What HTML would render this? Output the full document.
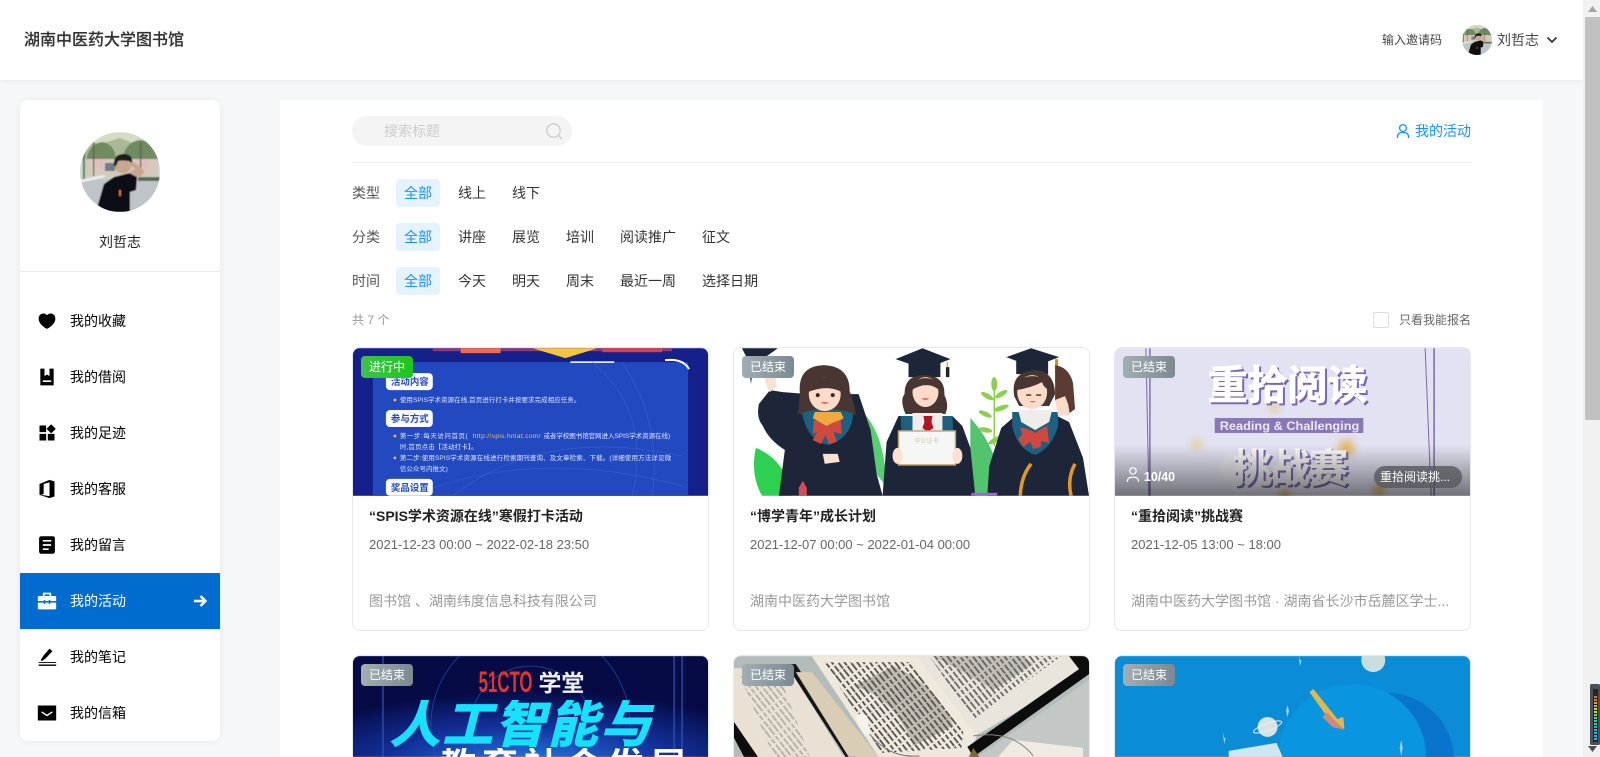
<!DOCTYPE html>
<html lang="zh-CN"><head><meta charset="utf-8"><title>湖南中医药大学图书馆</title>
<style>
*{box-sizing:border-box;margin:0;padding:0}
html,body{width:1600px;height:757px;overflow:hidden;background:#f6f7f9}
body{position:relative;font-family:"Liberation Sans","Noto Sans CJK SC",sans-serif;font-size:14px;color:#333}
.a{position:absolute;white-space:nowrap}
#hd{left:0;top:0;width:1583px;height:80px;background:#fff;box-shadow:0 1px 5px rgba(0,0,0,.06)}
#side{left:20px;top:100px;width:200px;height:641px;background:#fff;border-radius:8px;box-shadow:0 0 8px rgba(0,0,0,.06);overflow:hidden}
.row{position:absolute;left:0;width:200px;height:56px;line-height:56px;color:#000}
.row span{position:absolute;left:50px;top:0}
.row svg{position:absolute;left:17px;top:18px;width:20px;height:20px}
.row.on{background:#006ccf;color:#fff}
#main{left:280px;top:100px;width:1263px;height:657px;background:#fff}
.lb{left:352px;line-height:28px;color:#555}
.pill{line-height:28px;height:28px;color:#333}
.pill.on{background:#e5f2ff;color:#1890ff;border-radius:4px;width:44px;text-align:center}
.card{position:absolute;width:357px;height:284px;background:#fff;border:1px solid #e8e8e8;border-radius:8px;overflow:hidden}
.card.r2{height:102px;border-bottom:0;border-radius:8px 8px 0 0}
.card svg.im{position:absolute;left:0;top:0;width:355px;height:148px}
.card.r2 svg.im{height:101px}
.tag{position:absolute;left:8px;top:8px;width:52px;height:22px;border-radius:4px;color:#fff;font-size:12px;line-height:22px;text-align:center;background:linear-gradient(90deg,#a1aeb3,#7c8991)}
.tag.g{background:linear-gradient(90deg,#3ec24a,#1fc41f)}
.t{position:absolute;left:16px;top:158px;line-height:20px;font-weight:bold;color:#222;white-space:nowrap}
.d{position:absolute;left:16px;top:187px;line-height:20px;font-size:13px;color:#666;white-space:nowrap}
.o{position:absolute;left:16px;top:243px;line-height:20px;color:#999;white-space:nowrap;width:324px;overflow:hidden;text-overflow:ellipsis}
#sb{left:1583px;top:0;width:17px;height:757px;background:#f1f1f1}
</style></head><body>

<div class="a" id="hd"></div>
<div class="a" style="left:24px;top:29px;line-height:24px;font-size:16px;font-weight:500;color:#333;-webkit-text-stroke:.15px #333">湖南中医药大学图书馆</div>
<div class="a" style="left:1382px;top:30px;line-height:20px;font-size:12px;color:#444">输入邀请码</div>
<svg class="a" style="left:1462px;top:25px" width="30" height="30" viewBox="0 0 80 80"><defs><clipPath id="c1"><circle cx="40" cy="40" r="40"/></clipPath></defs><g clip-path="url(#c1)"><use href="#av"/></g></svg>
<div class="a" style="left:1497px;top:30px;line-height:20px;color:#444">刘哲志</div>
<svg class="a" style="left:1546px;top:35px" width="12" height="10" viewBox="0 0 12 10"><path d="M1.500 2.500 6 7l4.500-4.500" fill="none" stroke="#333" stroke-width="1.700"/></svg>

<div class="a" id="side">
 <svg style="position:absolute;left:60px;top:32px" width="80" height="80" viewBox="0 0 80 80"><defs><clipPath id="c2"><circle cx="40" cy="40" r="40"/></clipPath><filter id="bav" x="0" y="0" width="100%" height="100%"><feGaussianBlur stdDeviation=".5"/></filter>
 <g id="av"><rect width="80" height="80" fill="#cfd3c4"/><rect width="80" height="28" fill="#a9b896"/><path d="M0 0h80v8L60 14 40 6 20 12 0 8Z" fill="#d6dcc4"/><path d="M6 30q2-18 16-20 14 2 14 20ZM42 28q4-20 20-20 14 4 18 20Z" fill="#708a62"/><rect x="4" y="27" width="74" height="17" fill="#d4cabb"/><rect x="14" y="27" width="9" height="10" fill="#e2bdbd"/><rect x="58" y="27" width="10" height="10" fill="#e2bdbd"/><rect x="25" y="31" width="10" height="8" fill="#727a86"/><rect x="3" y="20" width="2" height="27" fill="#3f8a60"/><rect x="13" y="10" width="1.200" height="34" fill="#55634a"/><rect x="60" y="10" width="1.200" height="34" fill="#55634a"/><path d="M0 50 30 46h50v34H0Z" fill="#bfc4c8"/><path d="M0 48l24-5 1 2L0 51Z" fill="#eee"/><path d="M58 45h22v4H58Z" fill="#5f6a52"/>
 <path d="M17 76 24 52 34 45 50 41l7 4-1 13-6 2 0 20H18Z" fill="#101012"/><path d="M49 41l8 4 8-4-4-6-10-6-3 2 7 6Z" fill="#c9a58d"/><circle cx="43" cy="33" r="8.500" fill="#c9a690"/><path d="M34 34q-1-12 10-12 9 0 8 9l-3-2q-8-1-11 0l-2 5Z" fill="#1a1a1f"/><rect x="39" y="58" width="2" height="6" fill="#d8713a"/></g></defs><g clip-path="url(#c2)"><g filter="url(#bav)"><use href="#av"/></g></g></svg>
 <div style="position:absolute;left:0;width:200px;top:132px;text-align:center;line-height:20px;color:#222">刘哲志</div>
 <div style="position:absolute;left:0;top:171px;width:200px;height:1px;background:#eee"></div>

 <div class="row" style="top:193px"><svg viewBox="0 0 24 24"><path d="M16.500 3C19.538 3 22 5.500 22 9c0 7-7.500 11-10 12.500C9.500 20 2 16 2 9c0-3.500 2.500-6 5.500-6C9.360 3 11 4 12 5c1-1 2.640-2 4.500-2z"/></svg><span>我的收藏</span></div>
 <div class="row" style="top:249px"><svg viewBox="0 0 24 24"><path fill-rule="evenodd" d="M4 2h5v9l3-2 3 2V2h5v20H4ZM7 16v2h10v-2Z"/></svg><span>我的借阅</span></div>
 <div class="row" style="top:305px"><svg viewBox="0 0 24 24"><path d="M3 3h8v8H3ZM3 13h8v8H3ZM13 13h8v8h-8ZM17 1.500 22.500 7 17 12.500 11.500 7Z"/></svg><span>我的足迹</span></div>
 <div class="row" style="top:361px"><svg viewBox="0 0 24 24"><path fill-rule="evenodd" d="M3 19V6L15 1l6 2v18l-6 2ZM15 4 8 6v12l-3 1 10 1.500Z"/></svg><span>我的客服</span></div>
 <div class="row" style="top:417px"><svg viewBox="0 0 24 24"><path fill-rule="evenodd" d="M5 1.500h14a2.500 2.500 0 0 1 2.500 2.500v16a2.500 2.500 0 0 1-2.500 2.500H5A2.500 2.500 0 0 1 2.500 20V4A2.500 2.500 0 0 1 5 1.500ZM7 6v2h10V6ZM7 11v2h10v-2ZM7 16v2h7v-2Z"/></svg><span>我的留言</span></div>
 <div class="row on" style="top:473px"><svg viewBox="0 0 24 24" fill="#fff"><path fill-rule="evenodd" d="M7 6V3a1 1 0 0 1 1-1h8a1 1 0 0 1 1 1v3h5a1 1 0 0 1 1 1v5H16v-1h-2v1H10v-1H8v1H1V7a1 1 0 0 1 1-1ZM9 4v2h6V4ZM1 14h7v1.500h2V14h4v1.500h2V14h7v7a1 1 0 0 1-1 1H2a1 1 0 0 1-1-1Z"/></svg><span>我的活动</span><svg viewBox="0 0 16 16" style="left:172px;top:20px;width:16px;height:16px"><path d="M2 8h11M8.500 3 13.500 8 8.500 13" fill="none" stroke="#fff" stroke-width="2.400"/></svg></div>
 <div class="row" style="top:529px"><svg viewBox="0 0 24 24"><path d="M2 21h21v1.600H2ZM2 18h21v1H2ZM15 2l3.500 3L11 13l-5 4-1.500-1.500L8 10Z"/></svg><span>我的笔记</span></div>
 <div class="row" style="top:585px"><svg viewBox="0 0 24 24"><path fill-rule="evenodd" d="M1 3h22v18H1ZM6 10l-1 1.200 7 4.800 7-4.800-1-1.200-6 4Z"/></svg><span>我的信箱</span></div>
</div>

<div class="a" id="main"></div>
<div class="a" style="left:352px;top:116px;width:220px;height:30px;border-radius:15px;background:#f4f4f4"></div>
<div class="a" style="left:384px;top:121px;line-height:20px;color:#ccc">搜索标题</div>
<svg class="a" style="left:546px;top:123px" width="17" height="17" viewBox="0 0 17 17"><circle cx="7.500" cy="7.500" r="6.700" fill="none" stroke="#ccc" stroke-width="1.300"/><path d="M12.500 12.500 16 16" stroke="#ccc" stroke-width="1.400"/></svg>
<svg class="a" style="left:1396px;top:123px" width="14" height="16" viewBox="0 0 14 16"><circle cx="7" cy="5" r="3.400" fill="none" stroke="#1890ff" stroke-width="1.300"/><path d="M1.500 15v-1.500a4 4 0 0 1 4-4h3a4 4 0 0 1 4 4V15" fill="none" stroke="#1890ff" stroke-width="1.300"/></svg>
<div class="a" style="left:1415px;top:121px;line-height:20px;font-size:14px;color:#1890ff">我的活动</div>
<div class="a" style="left:352px;top:162px;width:1120px;height:1px;background:#eee"></div>

<div class="a lb" style="top:179px">类型</div><div class="a pill on" style="left:396px;top:179px">全部</div><div class="a pill" style="left:458px;top:179px">线上</div><div class="a pill" style="left:512px;top:179px">线下</div>
<div class="a lb" style="top:223px">分类</div><div class="a pill on" style="left:396px;top:223px">全部</div><div class="a pill" style="left:458px;top:223px">讲座</div><div class="a pill" style="left:512px;top:223px">展览</div><div class="a pill" style="left:566px;top:223px">培训</div><div class="a pill" style="left:620px;top:223px">阅读推广</div><div class="a pill" style="left:702px;top:223px">征文</div>
<div class="a lb" style="top:267px">时间</div><div class="a pill on" style="left:396px;top:267px">全部</div><div class="a pill" style="left:458px;top:267px">今天</div><div class="a pill" style="left:512px;top:267px">明天</div><div class="a pill" style="left:566px;top:267px">周末</div><div class="a pill" style="left:620px;top:267px">最近一周</div><div class="a pill" style="left:702px;top:267px">选择日期</div>

<div class="a" style="left:352px;top:310px;line-height:20px;font-size:12px;color:#999">共 7 个</div>
<div class="a" style="left:1373px;top:312px;width:16px;height:16px;border:1px solid #ddd;border-radius:2px;background:#fff"></div>
<div class="a" style="left:1399px;top:310px;line-height:20px;font-size:12px;color:#666">只看我能报名</div>

<div class="card" style="left:352px;top:347px">
<svg class="im" viewBox="0 0 356 148"><defs><filter id="b1"><feGaussianBlur stdDeviation=".3"/></filter><filter id="b2"><feGaussianBlur stdDeviation=".6"/></filter><filter id="b3"><feGaussianBlur stdDeviation="4"/></filter></defs>
<rect width="356" height="148" fill="#15208b"/>
<rect x="80" y="0" width="240" height="3" fill="#8a3a78"/><rect x="108" y="0" width="40" height="5" fill="#ec6a56"/><rect x="250" y="0" width="60" height="4" fill="#d8404a"/>
<path d="M180 0h65l-32 10Z" fill="#f5c542"/>
<rect x="20" y="14" width="316" height="134" fill="#2349c0"/>
<path d="M218 14h44" stroke="#fff" stroke-width="1.500"/><path d="M313 12q18-2 24 9" fill="none" stroke="#fff" stroke-width="2"/>
<g fill="none" stroke="#3b60cf" stroke-width=".6"><path d="M240 14q60 50 40 134M270 14q40 60 30 134M100 148q90-70 230-40M60 148q120-50 270-10"/></g>
<g filter="url(#b1)">
<rect x="33" y="25" width="47" height="17" rx="4" fill="#fff"/><rect x="33" y="62" width="47" height="17" rx="4" fill="#fff"/><rect x="33" y="131" width="47" height="17" rx="4" fill="#fff"/>
<g font-size="9.500" font-weight="bold" fill="#2349c0" text-anchor="middle"><text x="57" y="37">活动内容</text><text x="57" y="74">参与方式</text><text x="57" y="143">奖品设置</text></g>
<g fill="#f5b83a"><circle cx="42" cy="52" r="1.400"/><circle cx="42" cy="88" r="1.400"/><circle cx="42" cy="110" r="1.400"/></g>
<g font-size="6.500" fill="#dfe6ff">
<text x="47" y="54" textLength="181">使用SPIS学术资源在线,首页进行打卡并按要求完成相应任务。</text>
<text x="47" y="90" textLength="68">第一步:每天访问首页(</text><text x="120" y="90" textLength="68" fill="#e8c860">http://spis.hnlat.com/</text><text x="191" y="90" textLength="127">或者学校图书馆官网进入SPIS学术资源在线)</text>
<text x="47" y="101" textLength="78">时,首页点击【活动打卡】。</text>
<text x="47" y="112" textLength="272">第二步:使用SPIS学术资源在线进行检索期刊查询、及文章检索、下载。(详细使用方法详见微</text>
<text x="47" y="123" textLength="48">信公众号内推文)</text></g></g></svg>
<div class="tag g">进行中</div>
<div class="t">“SPIS学术资源在线”寒假打卡活动</div><div class="d">2021-12-23 00:00 ~ 2022-02-18 23:50</div><div class="o">图书馆 、湖南纬度信息科技有限公司</div></div>

<div class="card" style="left:733px;top:347px">
<svg class="im" viewBox="0 0 356 148"><rect width="356" height="148" fill="#fff"/>
<g filter="url(#b1)">
<path d="M22 100q30 12 36 48H28q-12-22-6-48Z" fill="#2fd04f"/><path d="M129 64q22 22 24 74-26-24-24-74Z" fill="#56cf6e"/><path d="M237 70q28 30 33 78h-33Z" fill="#52c46e"/>
<path d="M261 30v68" stroke="#8ccf4f" stroke-width="1.500"/><g fill="#8ccf4f"><ellipse cx="261" cy="36" rx="3" ry="7"/><ellipse cx="254" cy="48" rx="7" ry="2.500" transform="rotate(30 254 48)"/><ellipse cx="268" cy="46" rx="7" ry="2.500" transform="rotate(-30 268 46)"/><ellipse cx="252" cy="66" rx="7" ry="2.500" transform="rotate(25 252 66)"/><ellipse cx="268" cy="60" rx="8" ry="2.500" transform="rotate(-20 268 60)"/><ellipse cx="252" cy="82" rx="7" ry="2.500" transform="rotate(10 252 82)"/><ellipse cx="262" cy="92" rx="8" ry="2.500" transform="rotate(-30 262 92)"/></g>
<!-- left figure -->
<path d="M8 0h36L30 10 20 12 17 36 14 12Z" fill="#1c2539"/>
<path d="M36 42l-11 14q-3 14 4 22 6 14 22 24l-6 46h104l-6-22-6-44-12-36-50 0-26-2Z" fill="#1c2539"/>
<path d="M36 44q-5-7-5-16l5-5 5 3 2 12Z" fill="#fbe1cf"/>
<path d="M64 66q2-14 2-22-2-26 24-27 26 1 26 26 6 16 6 24Z" fill="#4a3533"/>
<path d="M68 65q24-8 51 0l0 6q-4 20-24 26-20-2-27-32Z" fill="#1c6280"/><path d="M81 64h26l3 6-15 10-16-10Z" fill="#f0a840"/>
<ellipse cx="91" cy="46" rx="16" ry="17" fill="#fcdcc8"/><path d="M74 44q0-15 17-15 17 0 17 15-14-8-34 0Z" fill="#4a3533"/>
<circle cx="84" cy="47" r="2" fill="#3a2a28"/><circle cx="99" cy="47" r="2" fill="#3a2a28"/><path d="M87 54q4 4 8 0Z" fill="#e66"/>
<path d="M80 72q8 3 13 6 6-4 14-6l1 14-8-2 3 10-8 2-3-9-5 9-8-4 4-8-4 2Z" fill="#cf4a40"/>
<path d="M89 106h15l2 8-15 2Z" fill="#fbe1cf"/>
<!-- center figure -->
<path d="M162 11 189 0l28 11-26 10Z" fill="#1c2539"/><rect x="175" y="14" width="32" height="15" fill="#1c2539"/>
<path d="M214 14v6" stroke="#e4a030" stroke-width="1.500"/><rect x="212.500" y="19" width="3.500" height="10" fill="#222"/>
<path d="M172 66q-6-14-1-20 0-19 19-19 22 0 21 20 5 10 1 19Z" fill="#4a3533"/><ellipse cx="192" cy="44" rx="13" ry="15" fill="#fcdcc8"/><path d="M178 42q2-12 14-12 12 0 14 12-12-10-28 0Z" fill="#4a3533"/><path d="M188 50q4 4 8 0Z" fill="#e66"/>
<path d="M165 68h54l10 10 8 22 5 48H149l4-54Z" fill="#1c2539"/><path d="M167 68h52l1 18h-52Z" fill="#1c6280"/><path d="M179 65h30v18h-30Z" fill="#f0ecec"/><path d="M190 68h9l-1 6 2 6-6 4-5-4 2-6Z" fill="#b01420"/>
<rect x="165" y="83" width="57" height="34" fill="#f6f6f6" stroke="#c8a878" stroke-width="1.500"/><text x="193" y="95" font-size="6" text-anchor="middle" fill="#d8c8a8">毕业证书</text>
<ellipse cx="164" cy="108" rx="5" ry="8" fill="#fbe1cf"/><ellipse cx="224" cy="108" rx="5" ry="8" fill="#fbe1cf"/>
<!-- right figure -->
<path d="M273 9 298 0l28 9-26 10Z" fill="#1c2539"/><rect x="283" y="10" width="32" height="16" fill="#1c2539"/>
<rect x="322" y="11" width="3" height="11" fill="#c8901c"/>
<path d="M322 17q14 2 18 18l2 26-8 6-12-14Z" fill="#5b3a30"/>
<path d="M281 48q-4-24 20-26 20 0 21 24l-6 12h-30Z" fill="#4a3533"/><ellipse cx="299" cy="44" rx="15" ry="17" fill="#fcdcc8"/><path d="M283 42q2-14 16-14 16 0 17 14-6-3-7-8-12 6-26 8Z" fill="#4a3533"/><path d="M293 47h5M303 47h5" stroke="#3a2a28" stroke-width="1.300"/><path d="M296 53q4 3 7 0Z" fill="#e66"/>
<path d="M268 80l16-14h36l16 8 14 36 6 38H254l2-30Z" fill="#1c2539"/><path d="M279 64h46l0 14q-6 22-23 29-18-6-23-29Z" fill="#1c6280"/><path d="M285 62h34l-3 12-14 8-14-8Z" fill="#f0ecec"/>
<path d="M287 80q8 0 15 5 6-5 12-7l2 17-8-2 0 6-8 2-3-7-7 5-5-8 4-5Z" fill="#cf4a40"/>
<path d="M298 116q-10 12-11 32" stroke="#e29a20" stroke-width="3.500" fill="none"/><path d="M342 116q-8 14-4 32" stroke="#e29a20" stroke-width="3.500" fill="none"/>
<path d="M322 52l10-4 3 8 2 11-12 1Z" fill="#fbdcc8"/>
<path d="M65 140l4-7 4 7v8h-8Z" fill="#d94a5a"/><rect x="238" y="145" width="26" height="3" fill="#a060e0"/>
</g></svg>
<div class="tag">已结束</div>
<div class="t">“博学青年”成长计划</div><div class="d">2021-12-07 00:00 ~ 2022-01-04 00:00</div><div class="o">湖南中医药大学图书馆</div></div>

<div class="card" style="left:1114px;top:347px">
<svg class="im" viewBox="0 0 356 148"><defs><linearGradient id="ov" x1="0" y1="0" x2="0" y2="1"><stop offset="0" stop-color="#000" stop-opacity="0"/><stop offset="1" stop-color="#000" stop-opacity=".5"/></linearGradient><linearGradient id="wg" x1="0" y1="0" x2="0" y2="1"><stop offset="0" stop-color="#fff"/><stop offset="1" stop-color="#e0e0e0"/></linearGradient></defs>
<rect width="356" height="148" fill="#e2e2f2"/>
<g filter="url(#b3)" opacity=".75"><circle cx="160" cy="60" r="5" fill="#e8c46a"/><circle cx="82" cy="96" r="6" fill="#e8c88a"/><circle cx="232" cy="100" r="8" fill="#e8a830"/><circle cx="120" cy="120" r="14" fill="#eee"/><circle cx="265" cy="142" r="6" fill="#d8a030"/><circle cx="170" cy="148" r="6" fill="#d8a030"/></g>
<g stroke="#7d68ab" fill="none"><path d="M31 0l3 148" stroke-width="1"/><path d="M35 0v148" stroke-width="1.400"/><path d="M311 0l6 148" stroke-width="1"/><path d="M320 0l0 148" stroke-width="1.500"/></g>
<g filter="url(#b1)"><g font-weight="bold" text-anchor="middle" font-size="40" stroke-width=".8">
<text x="175" y="53" fill="#7d68ab" stroke="#7d68ab" textLength="160">重拾阅读</text><text x="173" y="51" fill="#fff" stroke="#fff" textLength="160">重拾阅读</text>
<text x="178" y="136" fill="#7d68ab" stroke="#7d68ab" textLength="116">挑战赛</text><text x="176" y="134" fill="url(#wg)" stroke="#eee" stroke-width=".5" textLength="116">挑战赛</text></g>
<rect x="100" y="70" width="149" height="15" fill="#8a78b6"/><text x="175" y="82" font-size="12" font-weight="bold" fill="#ece9f6" text-anchor="middle" textLength="140" lengthAdjust="spacingAndGlyphs">Reading &amp; Challenging</text></g>
<rect y="97" width="356" height="51" fill="url(#ov)"/>
<g fill="none" stroke="#fff" stroke-width="1.200"><circle cx="18" cy="123" r="3.200"/><path d="M12.500 134v-1a3.500 3.500 0 0 1 3.500-3.500h4a3.500 3.500 0 0 1 3.500 3.500v1"/></g>
<text x="29" y="133" font-size="12.500" font-weight="bold" fill="#fff">10/40</text></svg>
<div class="tag">已结束</div>
<div style="position:absolute;left:259px;top:118px;width:88px;height:22px;border-radius:11px;background:rgba(85,85,90,.78);color:#fff;font-size:12px;line-height:22px;padding-left:6px;white-space:nowrap">重拾阅读挑...</div>
<div class="t">“重拾阅读”挑战赛</div><div class="d">2021-12-05 13:00 ~ 18:00</div><div class="o" style="width:320px">湖南中医药大学图书馆 · 湖南省长沙市岳麓区学士...</div></div>

<div class="card r2" style="left:352px;top:655px">
<svg class="im" viewBox="0 0 356 101"><defs><radialGradient id="g4" cx=".5" cy="1.100" r=".75"><stop offset="0" stop-color="#2a7fe8"/><stop offset=".55" stop-color="#12309a"/><stop offset="1" stop-color="#060a45"/></radialGradient></defs>
<rect width="356" height="101" fill="url(#g4)"/><g fill="none" stroke="#2a5cc0" stroke-opacity=".6"><path d="M126.600 101A60 60 0 1 1 229.400 101"/><path d="M83 101A100 100 0 1 1 273 101"/><path d="M30 0v101M330 0v101M322 0v101" stroke-width="2"/></g>
<g filter="url(#b1)"><text x="126" y="36" font-size="30" font-weight="bold" fill="#e0342a" textLength="54" lengthAdjust="spacingAndGlyphs">51CTO</text><text x="186" y="35" font-size="23" font-weight="bold" fill="#f0f0f4" textLength="46">学堂</text></g></svg>
<div style="position:absolute;left:37px;top:44px;width:300px;height:57px;overflow:hidden;font-size:50px;line-height:50px;font-weight:bold;font-style:italic;letter-spacing:2.600px;color:#16e2ff;-webkit-text-stroke:1.200px #16e2ff;white-space:nowrap">人工智能与</div>
<div style="position:absolute;left:87px;top:92px;width:260px;height:9px;overflow:hidden;font-size:36px;line-height:36px;font-weight:bold;letter-spacing:6px;color:#fff;white-space:nowrap">教育社会发展</div>
<div class="tag">已结束</div></div>

<div class="card r2" style="left:733px;top:655px">
<svg class="im" viewBox="0 0 356 101"><defs><pattern id="tx" width="26" height="5" patternUnits="userSpaceOnUse" patternTransform="rotate(52)"><rect width="26" height="5" fill="none"/><path d="M0 1.500h9M11 1.500h5M18 1.500h7" stroke="#4c4b4a" stroke-width="1.800"/></pattern></defs><rect width="356" height="101" fill="#b4bcbb"/>
<g filter="url(#b1)">
<path d="M0 12h55l55 89H15L0 70Z" fill="#e9e2d4"/><path d="M6 20h40l30 81H40Z" fill="url(#tx)" opacity=".35"/>
<path d="M0 66l24 35H10L0 82Z" fill="#111"/>
<path d="M52 8h10l60 93h-10Z" fill="#121212"/>
<path d="M62 16h16l67 85h-30Z" fill="#d9cdb5"/>
<path d="M78 0h106l60 79-9 22h-90Z" fill="#efe8dc"/>
<path d="M184 0h152l18 14-110 65Z" fill="#eae5dc"/>
<path d="M336 0h20v18L240 101l-6-10 112-78Z" fill="#0a0a0a"/>
<path d="M244 101 356 24v77Z" fill="#c3c8c6"/>
<path d="M265 101l15-17 70 8v9Z" fill="#efebe3"/>
<path d="M90 6h86l54 70-2 16-80 5Z" fill="url(#tx)"/>
<path d="M196 0h132l-88 64Z" fill="url(#tx)" opacity=".85"/>
<path d="M120 30q40 10 60 60l40-20q-16-40-60-60Z" fill="#55554f" opacity=".3"/>
<path d="M200 0q30 16 60 34l40-26-10-8Z" fill="#55554f" opacity=".25"/>
<path d="M122 62q5-8 11-2l4 18-6 2Z" fill="#f6f3ee"/><path d="M136 78q20 25 50 22" fill="none" stroke="#777" stroke-width="1"/><path d="M240 80q40-6 60 20" fill="none" stroke="#87837a"/><path d="M240 92l6 9h-10Z" fill="#7a6a3a"/></g></svg>
<div class="tag">已结束</div></div>

<div class="card r2" style="left:1114px;top:655px">
<svg class="im" viewBox="0 0 356 101"><rect width="356" height="101" fill="#0a8dd6"/><path d="M204.100 101A68 68 0 0 1 339.900 101Z" fill="#0874cc"/><path d="M164 101A74 73 0 0 1 312 101Z" fill="#0a95e0"/>
<g filter="url(#b1)"><circle cx="153" cy="71" r="10" fill="#d7e3e2"/><ellipse cx="153" cy="71" rx="15" ry="3.500" fill="none" stroke="#eee" transform="rotate(-20 153 71)"/><circle cx="259" cy="4" r="12" fill="#c9dede"/><path d="M195 36l4-3 24 30 6-2 1 12-8-4-4-1Z" fill="#e3b84c"/><path d="M212 56l18 18-12-3-10-10Z" fill="#c98a7a"/><path d="M114 95l48-8 6 14h-54Z" fill="#cfe6f4"/><g fill="#9fd4ee"><path d="M184-2l1.500 6 1.500 0-1.500 6ZM108 76l1.500 6 1.500 0-1.500 6ZM173 49l1.500 6-1.500 6-1.500-6ZM287 84l1.500 8-1.500 8-1.500-8Z"/></g></g></svg>
<div class="tag">已结束</div></div>

<div class="a" id="sb"></div>
<div class="a" style="left:1585px;top:17px;width:15px;height:403px;background:#c1c1c1"></div>
<svg class="a" style="left:1585px;top:5px" width="15" height="8" viewBox="0 0 15 8"><path d="M3 7 7.500 1 12 7Z" fill="#a3a3a3"/></svg>
<svg class="a" style="left:1585px;top:745px" width="15" height="8" viewBox="0 0 15 8"><path d="M3 1 7.500 7 12 1Z" fill="#505050"/></svg>
<svg class="a" style="left:1590px;top:684px" width="10" height="61" viewBox="0 0 10 61"><rect width="10" height="61" rx="1.500" fill="#4a5058"/><rect x="3" y="5" width="5" height="53" fill="#22252b"/><g fill="#d8792a"><rect x="4" y="12" width="3" height="2"/><rect x="4" y="15" width="3" height="2"/></g><g fill="#e0a828"><rect x="4" y="18" width="3" height="2"/><rect x="4" y="21" width="3" height="2"/></g><g fill="#d6d832"><rect x="4" y="24" width="3" height="2"/><rect x="4" y="27" width="3" height="2"/></g><g fill="#78d050"><rect x="4" y="30" width="3" height="2"/><rect x="4" y="33" width="3" height="2"/></g><g fill="#38c8a8"><rect x="4" y="36" width="3" height="2"/><rect x="4" y="39" width="3" height="2"/></g><g fill="#30b0e0"><rect x="4" y="42" width="3" height="2"/><rect x="4" y="45" width="3" height="2"/><rect x="4" y="48" width="3" height="2"/><rect x="4" y="51" width="3" height="2"/><rect x="4" y="54" width="3" height="2"/></g></svg>
</body></html>
